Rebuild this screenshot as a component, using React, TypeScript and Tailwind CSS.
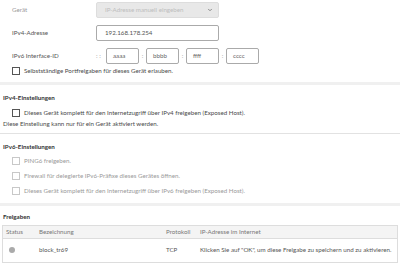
import { ChevronDown } from 'lucide-react';

function Check({ disabled = false }: { disabled?: boolean }) {
  return (
    <span
      className={`inline-block w-[8px] h-[8px] shrink-0 border bg-white ${disabled ? 'border-[#c8c8c8]' : 'border-[#555]'}`}
    />
  );
}

function V6Box({ value }: { value: string }) {
  return (
    <div className="w-[33px] h-[16px] border border-[#aaa] rounded-[2px] flex items-center pl-[6px] text-[#666]">
      {value}
    </div>
  );
}

function Colon() {
  return <span className="w-[7px] text-center text-[#999]">:</span>;
}

export default function App() {
  return (
    <div className="w-[400px] h-[264px] bg-white overflow-hidden text-[6.2px] leading-none text-[#4a4a4a] font-['Lato',sans-serif]">
      {/* device fields */}
      <div className="pl-[12px] pt-[2px]">
        <div className="flex items-center h-[16px]">
          <span className="w-[84px] text-[#9a9a9a]">Gerät</span>
          <div className="w-[123px] h-[16px] bg-[#e8e8e8] border border-[#ddd] rounded-[2px] flex items-center justify-between pl-[8px] pr-[5px] text-[#bdbdbd]">
            <span>IP-Adresse manuell eingeben</span>
            <ChevronDown className="w-[6px] h-[6px] text-[#888]" strokeWidth={4} />
          </div>
        </div>
        <div className="flex items-center h-[16px] mt-[7px]">
          <span className="w-[84px] text-[#555]">IPv4-Adresse</span>
          <div className="w-[123px] h-[16px] border border-[#aaa] rounded-[2px] flex items-center pl-[8px] text-[#555]">
            192.168.178.254
          </div>
        </div>
        <div className="flex items-center h-[16px] mt-[7px]">
          <span className="w-[84px] text-[#555]">IPv6 Interface-ID</span>
          <span className="w-[10px] text-[#999]">: :</span>
          <V6Box value="aaaa" />
          <Colon />
          <V6Box value="bbbb" />
          <Colon />
          <V6Box value="ffff" />
          <Colon />
          <V6Box value="cccc" />
        </div>
        <div className="flex items-center gap-[4px] h-[10px] mt-[2px]">
          <Check />
          <span>Selbstständige Portfreigaben für dieses Gerät erlauben.</span>
        </div>
      </div>

      <div className="h-[3px] bg-[#f0f0f0] mt-[6px]" />

      {/* IPv4 */}
      <div className="px-[3px] pt-[10px]">
        <div className="font-bold text-[#333]">IPv4-Einstellungen</div>
        <div className="flex items-center gap-[4px] pl-[9px] mt-[7px] h-[10px]">
          <Check />
          <span>Dieses Gerät komplett für den Internetzugriff über IPv4 freigeben (Exposed Host).</span>
        </div>
        <div className="mt-[3px]">Diese Einstellung kann nur für ein Gerät aktiviert werden.</div>
      </div>

      <div className="h-[1px] bg-[#e2e2e2] mt-[6px]" />

      {/* IPv6 */}
      <div className="px-[3px] pt-[10px]">
        <div className="font-bold text-[#333]">IPv6-Einstellungen</div>
        <div className="flex flex-col gap-[5px] pl-[9px] mt-[5px] text-[#9a9a9a]">
          <div className="flex items-center gap-[4px] h-[10px]">
            <Check disabled />
            <span>PING6 freigeben.</span>
          </div>
          <div className="flex items-center gap-[4px] h-[10px]">
            <Check disabled />
            <span>Firewall für delegierte IPv6-Präfixe dieses Gerätes öffnen.</span>
          </div>
          <div className="flex items-center gap-[4px] h-[10px]">
            <Check disabled />
            <span>Dieses Gerät komplett für den Internetzugriff über IPv6 freigeben (Exposed Host).</span>
          </div>
        </div>
      </div>

      <div className="h-[3px] bg-[#f0f0f0] mt-[7px]" />

      {/* Freigaben */}
      <div className="px-[2px] pt-[8px]">
        <div className="font-bold text-[#333] pl-[1px]">Freigaben</div>
        <div className="mt-[5px] border border-[#ddd]">
          <div className="flex items-center h-[13px] bg-[#f4f4f4] border-b border-[#ddd] text-[#777]">
            <span className="w-[36px] pl-[3px]">Status</span>
            <span className="w-[127px]">Bezeichnung</span>
            <span className="w-[34px]">Protokoll</span>
            <span>IP-Adresse im Internet</span>
          </div>
          <div className="flex items-center h-[23px] text-[#555]">
            <span className="w-[36px] pl-[6px]">
              <span className="block w-[6px] h-[6px] rounded-full bg-[#aaa]" />
            </span>
            <span className="w-[127px]">block_tr69</span>
            <span className="w-[34px]">TCP</span>
            <span>Klicken Sie auf "OK", um diese Freigabe zu speichern und zu aktivieren.</span>
          </div>
        </div>
      </div>
    </div>
  );
}
